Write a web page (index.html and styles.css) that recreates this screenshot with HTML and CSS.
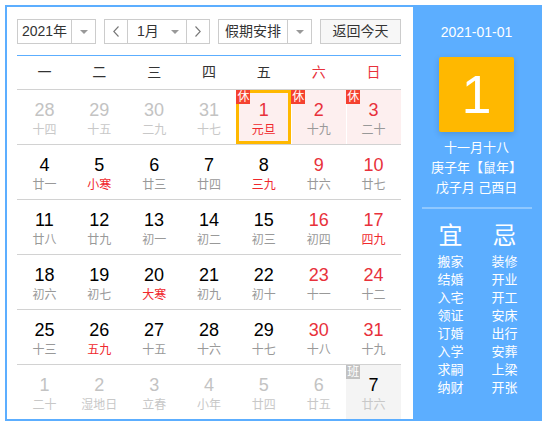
FILE: index.html
```html
<!DOCTYPE html>
<html lang="zh-CN">
<head>
    <meta charset="UTF-8" />
    <title>万年历</title>
    <link rel="stylesheet" href="styles.css">
</head>
<body>

    <div class="calendar">
        <div class="main">
            <div class="toolbar">
                <div class="select year-select">
                    <span class="select-text">2021年</span>
                    <span class="select-arrow"><i class="caret"></i></span>
                </div>
                <div class="month-group">
                    <span class="nav-btn">
                        <svg width="6" height="11" viewBox="0 0 6 11"><polyline points="5.5,0.5 0.8,5.5 5.5,10.5" fill="none" stroke="#777" stroke-width="1.1"/></svg>
                    </span>
                    <span class="month-text">1月</span>
                    <span class="month-arrow"><i class="caret"></i></span>
                    <span class="nav-btn">
                        <svg width="6" height="11" viewBox="0 0 6 11"><polyline points="0.5,0.5 5.2,5.5 0.5,10.5" fill="none" stroke="#777" stroke-width="1.1"/></svg>
                    </span>
                </div>
                <div class="select holiday-select">
                    <span class="select-text">假期安排</span>
                    <span class="select-arrow"><i class="caret"></i></span>
                </div>
                <button class="today-btn">返回今天</button>
            </div>

            <div class="week">
                <span>一</span><span>二</span><span>三</span><span>四</span><span>五</span>
                <span class="red">六</span><span class="red">日</span>
            </div>

            <div class="days" id="days"></div>
        </div>

        <div class="side">
            <div class="side-date">2021-01-01</div>
            <div class="big-day">1</div>
            <div class="lunar-info">
                <p>十一月十八</p>
                <p>庚子年【鼠年】</p>
                <p>戊子月 己酉日</p>
            </div>
            <div class="side-line"></div>
            <div class="yiji">
                <div class="yiji-col">
                    <h3>宜</h3>
                    <p>搬家</p><p>结婚</p><p>入宅</p><p>领证</p>
                    <p>订婚</p><p>入学</p><p>求嗣</p><p>纳财</p>
                </div>
                <div class="yiji-col">
                    <h3>忌</h3>
                    <p>装修</p><p>开业</p><p>开工</p><p>安床</p>
                    <p>出行</p><p>安葬</p><p>上梁</p><p>开张</p>
                </div>
            </div>
        </div>
    </div>

    <script>
        // [day, lunar, flags]  o=other month, w=weekend, f=festival, r=rest, s=selected, b=work day
        const days = [
            [28, '十四', 'o'], [29, '十五', 'o'], [30, '二九', 'o'], [31, '十七', 'o'],
            [1, '元旦', 'r s f w'], [2, '十九', 'r w'], [3, '二十', 'r w'],
            [4, '廿一', ''], [5, '小寒', 'f'], [6, '廿三', ''], [7, '廿四', ''],
            [8, '三九', 'f'], [9, '廿六', 'w'], [10, '廿七', 'w'],
            [11, '廿八', ''], [12, '廿九', ''], [13, '初一', ''], [14, '初二', ''],
            [15, '初三', ''], [16, '初四', 'w'], [17, '四九', 'w f'],
            [18, '初六', ''], [19, '初七', ''], [20, '大寒', 'f'], [21, '初九', ''],
            [22, '初十', ''], [23, '十一', 'w'], [24, '十二', 'w'],
            [25, '十三', ''], [26, '五九', 'f'], [27, '十五', ''], [28, '十六', ''],
            [29, '十七', ''], [30, '十八', 'w'], [31, '十九', 'w'],
            [1, '二十', 'o'], [2, '湿地日', 'o'], [3, '立春', 'o'], [4, '小年', 'o'],
            [5, '廿四', 'o'], [6, '廿五', 'o'], [7, '廿六', 'o b']
        ];

        const box = document.getElementById('days');
        days.forEach(([num, lunar, flags]) => {
            const f = flags.split(' ');
            const cell = document.createElement('div');
            cell.className = 'day';
            if (f.includes('o')) cell.classList.add('other');
            if (f.includes('w')) cell.classList.add('weekend');
            if (f.includes('f')) cell.classList.add('festival');
            if (f.includes('r')) cell.classList.add('rest');
            if (f.includes('s')) cell.classList.add('selected');
            if (f.includes('b')) cell.classList.add('work');
            let badge = '';
            if (f.includes('r')) badge = '<span class="badge">休</span>';
            if (f.includes('b')) badge = '<span class="badge gray">班</span>';
            cell.innerHTML = `${badge}<span class="num">${num}</span><span class="lunar">${lunar}</span>`;
            box.appendChild(cell);
        });
    </script>
</body>
</html>
```

FILE: styles.css
```css
body {
    margin: 0;
    font-family: "Liberation Sans", "Noto Sans CJK SC", sans-serif;
    color: #333;
}
.calendar {
    display: flex;
    width: 537px;
    height: 416px;
    margin: 5px 0 0 5px;
    border: 2px solid #5caeff;
    box-sizing: border-box;
}
.main {
    width: 406px;
    padding: 12px 12px 0 10px;
    box-sizing: border-box;
    background: #fff;
}

/* toolbar */
.toolbar {
    display: flex;
    gap: 8px;
    height: 25px;
    margin-bottom: 11px;
}
.select, .month-group, .today-btn {
    display: flex;
    height: 25px;
    border: 1px solid #ccc;
    box-sizing: border-box;
    font-size: 14px;
    line-height: 23px;
    color: #333;
}
.year-select {
    width: 79px;
}
.holiday-select {
    width: 94px;
}
.select-text {
    flex: 1;
    text-align: center;
}
.select-arrow {
    width: 23px;
    border-left: 1px solid #ccc;
    display: flex;
    align-items: center;
    justify-content: center;
}
.caret {
    width: 0;
    height: 0;
    border-left: 4px solid transparent;
    border-right: 4px solid transparent;
    border-top: 4px solid #999;
}
.month-group {
    width: 106px;
}
.nav-btn {
    width: 22px;
    display: flex;
    align-items: center;
    justify-content: center;
}
.nav-btn:first-child {
    border-right: 1px solid #ccc;
}
.nav-btn:last-child {
    border-left: 1px solid #ccc;
}
.month-text {
    flex: 1;
    padding-left: 9px;
}
.month-arrow {
    width: 22px;
    display: flex;
    align-items: center;
    justify-content: center;
}
.today-btn {
    width: 81px;
    padding: 0;
    justify-content: center;
    background: #f7f7f7;
    font-family: inherit;
}

/* week header */
.week {
    display: grid;
    grid-template-columns: repeat(7, 1fr);
    border-top: 1px solid #5caeff;
    height: 33px;
    line-height: 33px;
    font-size: 14px;
    text-align: center;
    color: #333;
}
.red {
    color: #e8313b;
}

/* days */
.days {
    display: grid;
    grid-template-columns: repeat(7, 1fr);
    grid-auto-rows: 55px;
}
.day {
    position: relative;
    border-top: 1px solid #d2d2d2;
    padding-top: 10px;
    box-sizing: border-box;
    text-align: center;
}
.num {
    display: block;
    font-size: 18px;
    line-height: 20px;
    color: #000;
}
.lunar {
    display: block;
    font-size: 12px;
    line-height: 20px;
    color: #999;
}
.weekend .num {
    color: #e8313b;
}
.festival .lunar {
    color: #f0282d;
}
.other .num {
    color: #c3c3c3;
}
.other .lunar {
    color: #c8c8c8;
}
.rest {
    background: #fdefef;
    box-shadow: inset 1px 0 0 #fff;
}
.selected {
    box-shadow: inset 0 0 0 3px #ffb800;
}
.work {
    background: #f4f4f4;
}
.work .num {
    color: #000;
}
.badge {
    position: absolute;
    top: 0;
    left: 0;
    width: 14px;
    height: 14px;
    background: #f5412f;
    color: #fff;
    font-size: 12px;
    line-height: 14px;
    text-align: center;
}
.badge.gray {
    background: #c2c2c2;
}

/* side panel */
.side {
    flex: 1;
    background: #5caeff;
    color: #fff;
    text-align: center;
    padding-top: 15px;
}
.side-date {
    font-size: 14px;
    line-height: 20px;
}
.big-day {
    width: 75px;
    height: 75px;
    margin: 15px auto 0;
    background: #ffb800;
    border-radius: 2px;
    box-shadow: 0 2px 6px rgba(0, 0, 0, 0.15);
    font-size: 54px;
    line-height: 75px;
}
.lunar-info {
    margin-top: 6px;
}
.lunar-info p {
    margin: 0;
    font-size: 13px;
    line-height: 20px;
}
.side-line {
    width: 110px;
    height: 2px;
    margin: 9px auto 0;
    background: #8fc8ff;
}
.yiji {
    display: flex;
    justify-content: center;
    gap: 28px;
    padding-left: 2px;
    margin-top: 12px;
}
.yiji-col h3 {
    margin: 0 0 2px;
    font-size: 24px;
    font-weight: normal;
    line-height: 30px;
}
.yiji-col p {
    margin: 0;
    font-size: 13px;
    line-height: 18px;
}
```
